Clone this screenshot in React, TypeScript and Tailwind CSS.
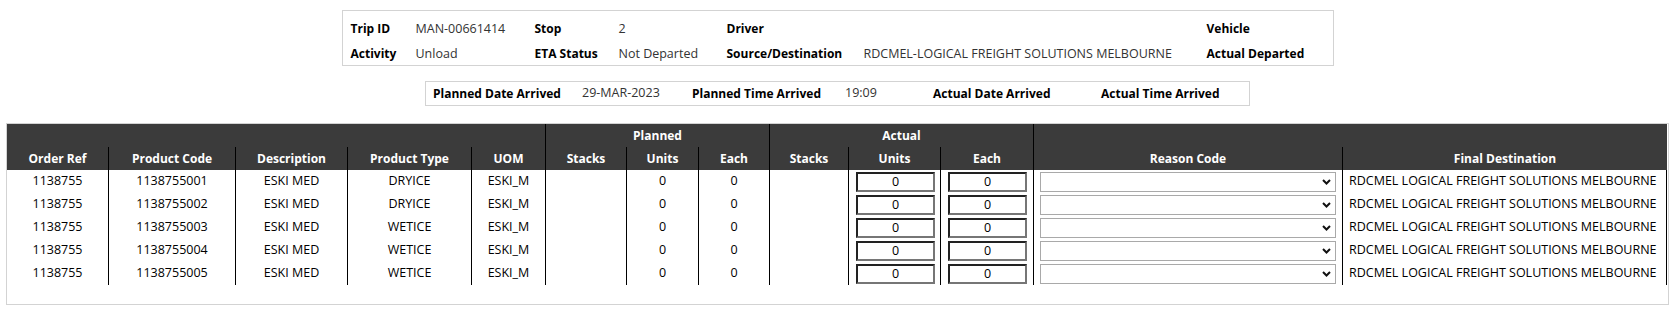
import { ChangeEvent, useState } from "react";

const font = "font-['Open_Sans',sans-serif]";
const cols =
  "grid grid-cols-[102px_127px_112px_124px_74px_81px_72px_71px_79px_92px_93px_309px_324px]";

const rows = [
  { order: "1138755", code: "1138755001", desc: "ESKI MED", type: "DRYICE", uom: "ESKI_M" },
  { order: "1138755", code: "1138755002", desc: "ESKI MED", type: "DRYICE", uom: "ESKI_M" },
  { order: "1138755", code: "1138755003", desc: "ESKI MED", type: "WETICE", uom: "ESKI_M" },
  { order: "1138755", code: "1138755004", desc: "ESKI MED", type: "WETICE", uom: "ESKI_M" },
  { order: "1138755", code: "1138755005", desc: "ESKI MED", type: "WETICE", uom: "ESKI_M" },
];

function Label({ children }: { children?: React.ReactNode }) {
  return <div className="text-[12px] font-bold text-black whitespace-nowrap">{children}</div>;
}

function Value({ children }: { children?: React.ReactNode }) {
  return <div className="text-[12.5px] text-[#333] whitespace-nowrap">{children}</div>;
}

function Cell({ children, className = "" }: { children?: React.ReactNode; className?: string }) {
  return (
    <div className={`h-[23px] border-r border-black flex items-center justify-center text-[12.5px] text-black ${className}`}>
      {children}
    </div>
  );
}

function HeadCell({ children, line = true }: { children?: React.ReactNode; line?: boolean }) {
  return (
    <div className={`h-[23px] flex items-center justify-center text-[12px] font-bold text-white ${line ? "border-r border-black" : ""}`}>
      {children}
    </div>
  );
}

function QtyInput() {
  const [v, setV] = useState("0");
  return (
    <input
      value={v}
      onChange={(e: ChangeEvent<HTMLInputElement>) => setV(e.target.value)}
      className="ml-[7px] w-[79px] h-[20px] border-2 border-t-[#222] border-l-[#222] border-r-[#767676] border-b-[#767676] bg-white text-center text-[12.5px] text-black outline-none"
    />
  );
}

function ReasonSelect() {
  return (
    <div className="relative ml-[6px] w-[296px] h-[20px]">
      <select className="appearance-none w-full h-full border border-[#a9a9a9] bg-white text-[12.5px] outline-none">
        <option value=""></option>
      </select>
      <svg
        className="pointer-events-none absolute right-[5px] top-[7px]"
        width="9"
        height="6"
        viewBox="0 0 9 6"
      >
        <polyline points="1,1 4.5,4.5 8,1" fill="none" stroke="#111" strokeWidth="2" />
      </svg>
    </div>
  );
}

export default function App() {
  return (
    <div className={`w-full bg-white pt-[10px] ${font}`}>
      {/* Trip summary */}
      <div className="mx-auto w-[992px] h-[56px] border border-[#d3d3d3] pl-[8px] pt-[8px]">
        <div className="grid grid-cols-[65px_119px_84px_108px_137px_343px_1fr] grid-rows-[20px_20px] gap-y-[5px] items-center">
          <Label>Trip ID</Label>
          <Value>MAN-00661414</Value>
          <Label>Stop</Label>
          <Value>2</Value>
          <Label>Driver</Label>
          <Value></Value>
          <Label>Vehicle</Label>

          <Label>Activity</Label>
          <Value>Unload</Value>
          <Label>ETA Status</Label>
          <Value>Not Departed</Value>
          <Label>Source/Destination</Label>
          <Value>RDCMEL-LOGICAL FREIGHT SOLUTIONS MELBOURNE</Value>
          <Label>Actual Departed</Label>
        </div>
      </div>

      {/* Arrival times */}
      <div className="mx-auto mt-[15px] w-[825px] h-[25px] border border-[#d3d3d3] pl-[7px] grid grid-cols-[149px_110px_153px_88px_168px_1fr] items-center">
        <Label>Planned Date Arrived</Label>
        <Value>29-MAR-2023</Value>
        <Label>Planned Time Arrived</Label>
        <Value>19:09</Value>
        <Label>Actual Date Arrived</Label>
        <Label>Actual Time Arrived</Label>
      </div>

      {/* Lines */}
      <div className="mx-[6px] mt-[17px] border border-[#d3d3d3] pb-[19px]">
        <div className="w-[1660px] bg-[#3b3b3b]">
          <div className={cols}>
            <div className="col-span-5"><HeadCell /></div>
            <div className="col-span-3"><HeadCell>Planned</HeadCell></div>
            <div className="col-span-3"><HeadCell>Actual</HeadCell></div>
            <div className="col-span-2"><HeadCell line={false} /></div>
          </div>
          <div className={cols}>
            <HeadCell>Order Ref</HeadCell>
            <HeadCell>Product Code</HeadCell>
            <HeadCell>Description</HeadCell>
            <HeadCell>Product Type</HeadCell>
            <HeadCell>UOM</HeadCell>
            <HeadCell>Stacks</HeadCell>
            <HeadCell>Units</HeadCell>
            <HeadCell>Each</HeadCell>
            <HeadCell>Stacks</HeadCell>
            <HeadCell>Units</HeadCell>
            <HeadCell>Each</HeadCell>
            <HeadCell>Reason Code</HeadCell>
            <HeadCell line={false}>Final Destination</HeadCell>
          </div>
        </div>

        <div className="w-[1660px]">
          {rows.map((r) => (
            <div key={r.code} className={cols}>
              <Cell>{r.order}</Cell>
              <Cell>{r.code}</Cell>
              <Cell>{r.desc}</Cell>
              <Cell>{r.type}</Cell>
              <Cell>{r.uom}</Cell>
              <Cell></Cell>
              <Cell>0</Cell>
              <Cell>0</Cell>
              <Cell></Cell>
              <Cell className="justify-start">
                <QtyInput />
              </Cell>
              <Cell className="justify-start">
                <QtyInput />
              </Cell>
              <Cell className="justify-start">
                <ReasonSelect />
              </Cell>
              <Cell className="justify-start pl-[6px] whitespace-nowrap">
                RDCMEL LOGICAL FREIGHT SOLUTIONS MELBOURNE
              </Cell>
            </div>
          ))}
        </div>
      </div>
    </div>
  );
}
